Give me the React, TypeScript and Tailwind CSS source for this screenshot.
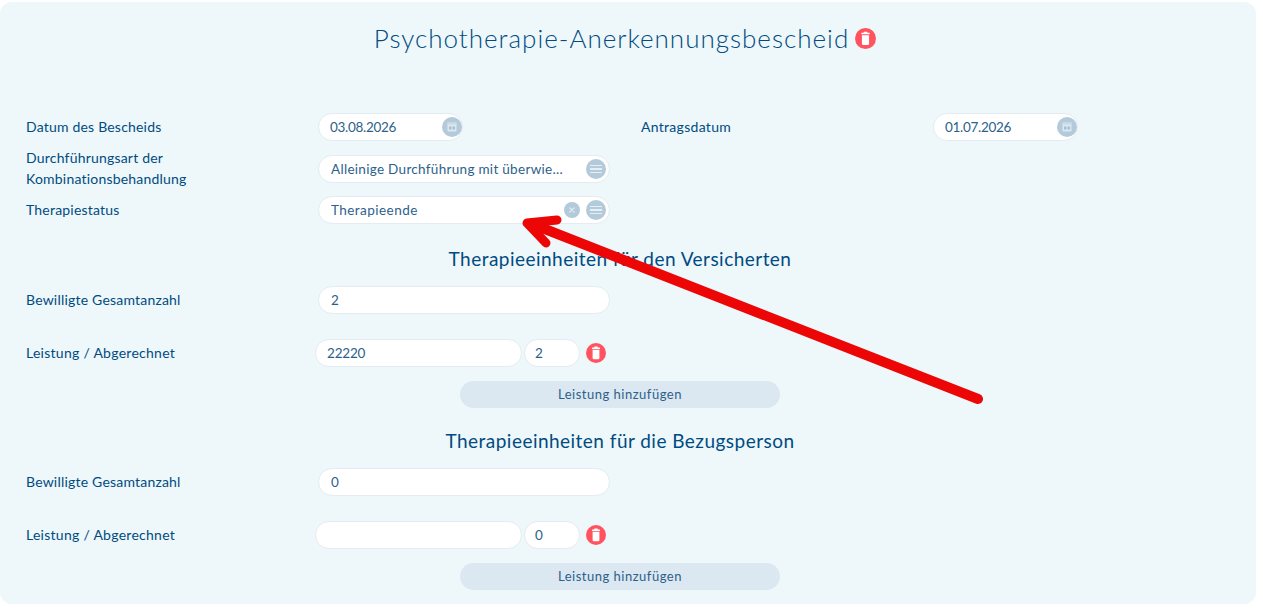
import React from "react";

const font = { fontFamily: "Lato, 'Open Sans', sans-serif" };

// Round red trash button
const TrashButton = ({ size = "w-5 h-5" }: { size?: string }) => (
  <span className={`${size} rounded-full bg-[#ff5460] flex items-center justify-center shrink-0`}>
    <svg viewBox="0 0 20 20" className="w-full h-full" fill="#fff">
      <rect x="6" y="4.6" width="8" height="1.4" rx="0.5" />
      <rect x="8.2" y="3.6" width="3.6" height="1.6" rx="0.5" />
      <path d="M6.6 6.8h6.8v8.2a1.3 1.3 0 0 1-1.3 1.3H7.9a1.3 1.3 0 0 1-1.3-1.3z" />
    </svg>
  </span>
);

const MenuButton = () => (
  <span className="w-5 h-5 rounded-full bg-[#b3cadb] flex flex-col items-center justify-center gap-[2px] shrink-0">
    <span className="w-[12px] h-[1.5px] bg-[#e6eff5]" />
    <span className="w-[12px] h-[1.5px] bg-[#e6eff5]" />
    <span className="w-[12px] h-[1.5px] bg-[#e6eff5]" />
  </span>
);

const CalendarButton = () => (
  <span className="w-5 h-5 rounded-full bg-[#b3cadb] flex items-center justify-center shrink-0">
    <svg viewBox="0 0 20 20" className="w-5 h-5" fill="none">
      <rect x="5.5" y="5.5" width="9" height="9" rx="1" fill="#dce8f0" />
      <rect x="5.5" y="5.5" width="9" height="2" fill="#c9dae6" />
      <rect x="7" y="9.5" width="2.5" height="3" fill="#a4bfd2" />
      <rect x="10.5" y="9.5" width="2.5" height="3" fill="#a4bfd2" />
    </svg>
  </span>
);

const ClearButton = () => (
  <span className="w-4 h-4 rounded-full bg-[#b3cadb] flex items-center justify-center shrink-0">
    <svg viewBox="0 0 16 16" className="w-4 h-4" stroke="#e6eff5" strokeWidth="1.2" strokeLinecap="round">
      <path d="M5.8 5.8l4.4 4.4M10.2 5.8l-4.4 4.4" />
    </svg>
  </span>
);

const Field = ({
  value,
  className = "w-[292px] pl-3 pr-[3px] tracking-[0.3px]",
  children,
}: {
  value?: string;
  className?: string;
  children?: React.ReactNode;
}) => (
  <div
    className={`${className} h-7 rounded-full bg-white border border-[#e4ecf2] flex items-center text-[13.5px] text-[#2d5f8b] shrink-0`}
  >
    <span className="flex-1 truncate">{value}</span>
    {children}
  </div>
);

const Label = ({ children }: { children: React.ReactNode }) => (
  <div className="w-[292px] shrink-0 pb-[2px] text-[14px] leading-[21px] text-[#004b82] tracking-[0.2px]">
    {children}
  </div>
);

const SectionTitle = ({ children, className }: { children: string; className: string }) => (
  <div className={`${className} w-[1188px] text-center text-[19px] leading-6 text-[#004b82] tracking-[0.47px]`}>
    {children}
  </div>
);

const AddButton = ({ className }: { className: string }) => (
  <div className={`${className} ml-[434px] w-[320px] h-[27px] rounded-full bg-[#dbe7f1] flex items-center justify-center text-[13px] text-[#2d5f8b] tracking-[0.5px]`}>
    Leistung hinzufügen
  </div>
);

const TherapyUnits = ({
  total,
  service,
  billed,
}: {
  total: string;
  service: string;
  billed: string;
}) => (
  <>
    <div className="flex items-center mt-[15px]">
      <Label>Bewilligte Gesamtanzahl</Label>
      <Field value={total} />
    </div>
    <div className="flex items-center mt-[25px]">
      <div className="w-[289px] shrink-0 pb-[2px] text-[14px] text-[#004b82] tracking-[0.27px]">
        Leistung / Abgerechnet
      </div>
      <Field value={service} className="w-[207px] pl-[11px] tracking-[-0.2px]" />
      <Field value={billed} className="w-[56px] ml-[2px] pl-[10px]" />
      <span className="ml-[6px]">
        <TrashButton />
      </span>
    </div>
  </>
);

export default function App() {
  return (
    <div className="relative w-[1263px] h-[609px] bg-white overflow-hidden" style={font}>
      <div className="mt-[2px] w-[1256px] h-[602px] rounded-xl bg-[#eef7f9] pl-[26px] pt-[20px]">
        {/* Heading */}
        <div className="flex items-center w-[1172px] justify-center pl-[26px]">
          <h1 className="text-[26px] leading-8 font-light text-[#004b82] tracking-[1px]">
            Psychotherapie-Anerkennungsbescheid
          </h1>
          <span className="ml-[6px]">
            <TrashButton size="w-[21px] h-[21px]" />
          </span>
        </div>

        {/* Dates */}
        <div className="flex items-center mt-[59px]">
          <Label>Datum des Bescheids</Label>
          <Field value="03.08.2026" className="w-[145px] pl-[11px] pr-0 tracking-[-0.3px]">
            <CalendarButton />
          </Field>
          <div className="ml-[178px] w-[292px] shrink-0 pb-[2px] text-[14px] text-[#004b82] tracking-[0.3px]">
            Antragsdatum
          </div>
          <Field value="01.07.2026" className="w-[145px] pl-[11px] pr-0 tracking-[-0.3px]">
            <CalendarButton />
          </Field>
        </div>

        <div className="flex items-center mt-[6px]">
          <Label>
            Durchführungsart der
            <br />
            Kombinationsbehandlung
          </Label>
          <Field value="Alleinige Durchführung mit überwie...">
            <MenuButton />
          </Field>
        </div>

        <div className="flex items-center mt-[5px]">
          <Label>Therapiestatus</Label>
          <Field value="Therapieende" className="w-[292px] pl-3 pr-[3px] tracking-[0.45px]">
            <span className="mr-[6px]">
              <ClearButton />
            </span>
            <MenuButton />
          </Field>
        </div>

        <SectionTitle className="mt-[23px]">Therapieeinheiten für den Versicherten</SectionTitle>
        <TherapyUnits total="2" service="22220" billed="2" />
        <AddButton className="mt-[14px]" />

        <SectionTitle className="mt-[21px]">Therapieeinheiten für die Bezugsperson</SectionTitle>
        <TherapyUnits total="0" service="" billed="0" />
        <AddButton className="mt-[14px]" />
      </div>

      {/* Red annotation arrow drawn over the form */}
      <svg className="absolute left-0 top-0 w-[1263px] h-[609px] pointer-events-none" viewBox="0 0 1263 609" fill="none">
        <path d="M978 399L532 224" stroke="#ec0606" strokeWidth="10" strokeLinecap="round" />
        <path
          d="M557 220L527 223L546 243"
          stroke="#ec0606"
          strokeWidth="9"
          strokeLinecap="round"
          strokeLinejoin="round"
        />
      </svg>
    </div>
  );
}
